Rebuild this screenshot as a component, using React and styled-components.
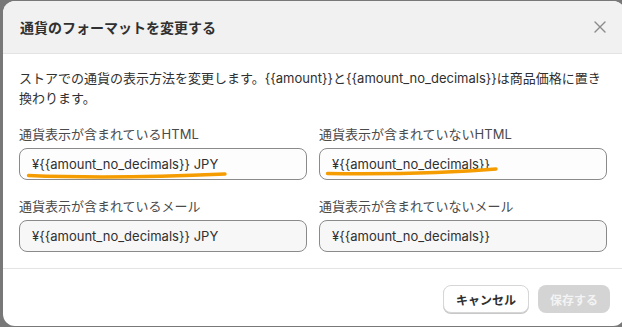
import React from 'react'
import styled, { createGlobalStyle } from 'styled-components'

const fields = [
  { label: '通貨表示が含まれているHTML', value: '¥{{amount_no_decimals}} JPY', mark: 'long' },
  { label: '通貨表示が含まれていないHTML', value: '¥{{amount_no_decimals}}', mark: 'short' },
  { label: '通貨表示が含まれているメール', value: '¥{{amount_no_decimals}} JPY' },
  { label: '通貨表示が含まれていないメール', value: '¥{{amount_no_decimals}}' },
]

const App = () => {
  return (
    <>
      <GlobalStyle />
      <Backdrop>
        <Modal>
          <Header>
            <Title>通貨のフォーマットを変更する</Title>
            <Close aria-label="閉じる">
              <svg width="12" height="12" viewBox="0 0 12 12">
                <path d="M1 1L11 11M11 1L1 11" stroke="#8a8a8a" strokeWidth="1.4" strokeLinecap="round" />
              </svg>
            </Close>
          </Header>
          <Body>
            <Desc>
              ストアでの通貨の表示方法を変更します。{'{{amount}}'}と{'{{amount_no_decimals}}'}は商品価格に置き換わります。
            </Desc>
            <Grid>
              {fields.map((f, i) => (
                <Field key={f.label}>
                  <Label>{f.label}</Label>
                  <InputWrap>
                    <Input readOnly value={f.value} $muted={i > 1} />
                    {f.mark === 'long' && (
                      <Mark width="202" height="10" viewBox="0 0 202 10" style={{ left: 7, top: 23 }}>
                        <path d="M2.5 4.5 C 50 6.5, 120 6.5, 199 3" stroke="#f59c00" strokeWidth="3.4" fill="none" strokeLinecap="round" />
                      </Mark>
                    )}
                    {f.mark === 'short' && (
                      <Mark width="174" height="12" viewBox="0 0 174 12" style={{ left: 6, top: 18 }}>
                        <path d="M2.5 7.5 C 50 8, 120 7.5, 171 3" stroke="#f59c00" strokeWidth="3.4" fill="none" strokeLinecap="round" />
                      </Mark>
                    )}
                  </InputWrap>
                </Field>
              ))}
            </Grid>
          </Body>
          <Footer>
            <Button>キャンセル</Button>
            <Button $primary disabled>保存する</Button>
          </Footer>
        </Modal>
      </Backdrop>
    </>
  )
}

export default App

const GlobalStyle = createGlobalStyle`
body {
  margin: 0;
  background: #787878;
  font-family: Inter, "Noto Sans CJK JP", sans-serif;
  color: #303030;
  overflow: hidden;
}
`

const Backdrop = styled.div`
padding: 1px 0 0 3px;
height: 327px;
box-sizing: border-box;
`

const Modal = styled.div`
width: 622px;
height: 325px;
background: #fff;
border-radius: 12px;
overflow: hidden;
display: flex;
flex-direction: column;
`

const Header = styled.div`
height: 52px;
flex: none;
display: flex;
align-items: center;
justify-content: space-between;
padding: 0 19px 0 17px;
background: #f1f1f1;
border-bottom: 1px solid #e3e3e3;
`

const Title = styled.h2`
margin: 0;
font-size: 14px;
font-weight: 700;
color: #303030;
`

const Close = styled.button`
border: none;
background: none;
padding: 0;
display: flex;
`

const Body = styled.div`
padding: 14px 16px 16px;
display: flex;
flex-direction: column;
gap: 16px;
border-bottom: 1px solid #e3e3e3;
`

const Desc = styled.p`
margin: 0;
font-size: 13px;
line-height: 20px;
color: #303030;
`

const Grid = styled.div`
display: grid;
grid-template-columns: 288px 288px;
column-gap: 12px;
row-gap: 16px;
`

const Field = styled.div`
display: flex;
flex-direction: column;
gap: 4px;
`

const Label = styled.label`
font-size: 13px;
line-height: 20px;
color: #4a4a4a;
`

const InputWrap = styled.div`
position: relative;
`

const Input = styled.input`
box-sizing: border-box;
width: 100%;
height: 32px;
padding: 0 12px;
border: 1px solid #8a8a8a;
border-radius: 8px;
background: ${p => (p.$muted ? '#f7f7f7' : '#fdfdfd')};
font-family: Inter, "Noto Sans CJK JP", sans-serif;
font-size: 13px;
color: #303030;
outline: none;
`

const Mark = styled.svg`
position: absolute;
pointer-events: none;
`

const Footer = styled.div`
flex: 1;
display: flex;
justify-content: flex-end;
align-items: flex-start;
gap: 9px;
padding: 16px 15px 0 0;
`

const Button = styled.button`
height: 28px;
padding: 0 12px;
border-radius: 8px;
font-family: Inter, "Noto Sans CJK JP", sans-serif;
font-size: 12px;
font-weight: 600;
border: ${p => (p.$primary ? 'none' : '1px solid #d6d6d6')};
background: ${p => (p.$primary ? '#d4d4d4' : '#fff')};
color: ${p => (p.$primary ? '#f3f3f3' : '#303030')};
box-shadow: ${p => (p.$primary ? 'none' : '0 1px 0 #c8c8c8')};
min-width: ${p => (p.$primary ? '71px' : '84px')};
`
